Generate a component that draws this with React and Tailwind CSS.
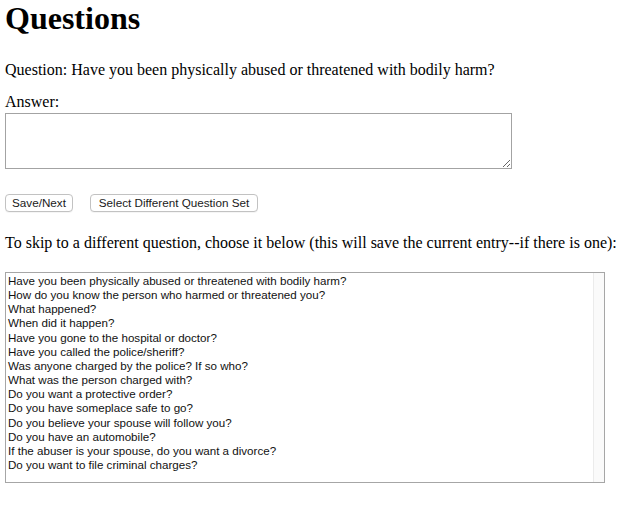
import { useState } from "react";

const QUESTIONS = [
  "Have you been physically abused or threatened with bodily harm?",
  "How do you know the person who harmed or threatened you?",
  "What happened?",
  "When did it happen?",
  "Have you gone to the hospital or doctor?",
  "Have you called the police/sheriff?",
  "Was anyone charged by the police? If so who?",
  "What was the person charged with?",
  "Do you want a protective order?",
  "Do you have someplace safe to go?",
  "Do you believe your spouse will follow you?",
  "Do you have an automobile?",
  "If the abuser is your spouse, do you want a divorce?",
  "Do you want to file criminal charges?",
];

export default function App() {
  const [answer, setAnswer] = useState("");
  const [current, setCurrent] = useState(0);

  return (
    <div className="min-h-screen bg-white pl-[5px] text-black font-['Liberation_Serif','Times_New_Roman',serif]">
      <h1 className="text-[32px] leading-[36px] font-bold">Questions</h1>

      <p className="mt-[25px] text-[16px] leading-[18px]">
        Question: {QUESTIONS[current]}
      </p>

      <label className="block mt-[14px] text-[16px] leading-[18px]">
        Answer:
      </label>
      <textarea
        className="block mt-[2px] w-[507px] h-[56px] border border-[#a3a3a3] bg-white outline-none resize"
        value={answer}
        onChange={(e) => setAnswer(e.target.value)}
      />

      <div className="flex gap-[17px] mt-[25px] font-['Liberation_Sans',Arial,sans-serif] text-[11.7px] text-[#1a1a1a]">
        <button
          className="h-[18px] w-[68px] rounded-[4px] border border-[#c2c2c2] bg-white leading-[16px] shadow-[0_1px_0_rgba(0,0,0,0.04)]"
          onClick={() => setCurrent((c) => Math.min(c + 1, QUESTIONS.length - 1))}
        >
          Save/Next
        </button>
        <button className="h-[18px] w-[168px] rounded-[4px] border border-[#c2c2c2] bg-white leading-[16px] shadow-[0_1px_0_rgba(0,0,0,0.04)]">
          Select Different Question Set
        </button>
      </div>

      <p className="mt-[22px] text-[16px] leading-[18px]">
        To skip to a different question, choose it below (this will save the
        current entry--if there is one):
      </p>

      <div className="flex mt-[20px] w-[600px] h-[211px] border border-[#a6a6a6] bg-white">
        <ul className="flex-1 pt-[1px] pl-[2px] font-['Liberation_Sans',Arial,sans-serif] text-[11.6px] leading-[14.15px] text-[#111]">
          {QUESTIONS.map((q, i) => (
            <li
              key={q}
              className="cursor-default whitespace-nowrap"
              onClick={() => setCurrent(i)}
            >
              {q}
            </li>
          ))}
        </ul>
        <div className="w-[11px] border-l border-[#ebebeb] bg-[#fafafa]" />
      </div>
    </div>
  );
}
